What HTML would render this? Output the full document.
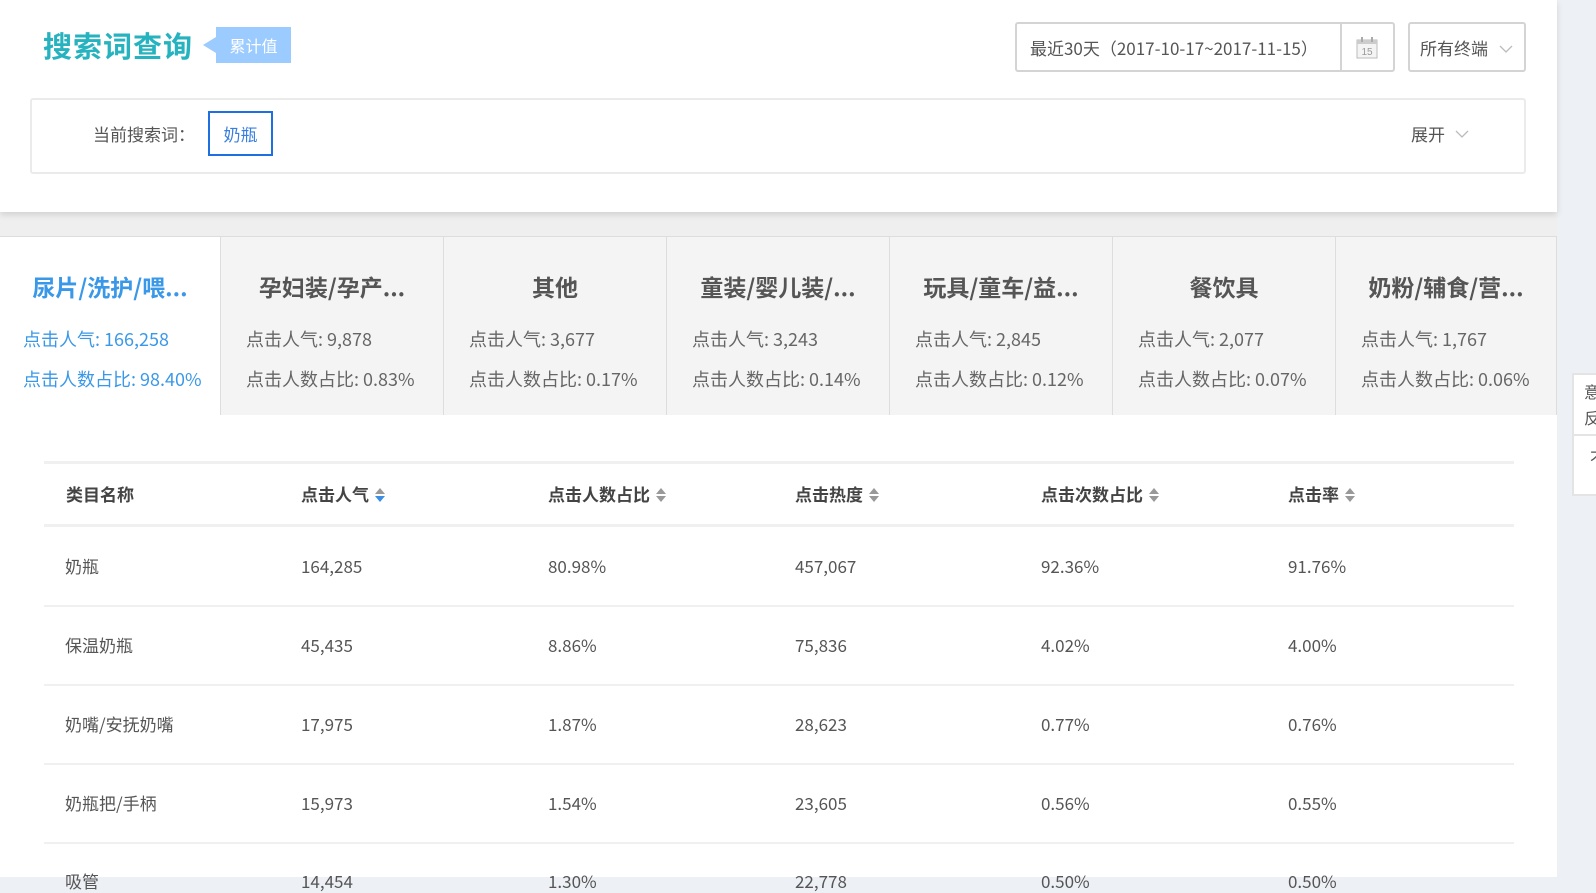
<!DOCTYPE html>
<html><head><meta charset="utf-8"><style>
*{margin:0;padding:0;box-sizing:border-box}
body{width:1596px;height:877px;overflow:hidden;background:#edf0f5;font-family:"Noto Sans CJK SC","Liberation Sans",sans-serif;color:#555;position:relative}
.a{position:absolute;white-space:nowrap;line-height:1.2}
#main{position:absolute;left:0;top:0;width:1557px;height:877px;background:#fff}
#top{position:absolute;left:0;top:0;width:1557px;height:212px;background:#fff;box-shadow:0 3px 6px rgba(0,0,0,.12);z-index:2}
#gap{position:absolute;left:0;top:212px;width:1557px;height:24px;background:#efefef}
.tab{position:absolute;top:236px;height:179px;width:223px;background:#f4f4f4;border-left:1px solid #ddd;border-top:1px solid #ddd}
.tab .t{position:absolute;top:36px;left:0;width:100%;text-align:center;font-size:23px;font-weight:bold;color:#555;line-height:1.2}
.tab .l{position:absolute;left:25px;font-size:18px;color:#666;line-height:1.2;white-space:nowrap}
.tab .l1{top:92px}.tab .l2{top:132px}
.hd{font-weight:bold;font-size:17px;color:#444}
.c{font-size:17px;color:#555}
.sort{display:inline-block;width:10px;height:16px;vertical-align:-2px;margin-left:6px;position:relative}
.sort:before{content:"";position:absolute;left:0;top:1px;border:5px solid transparent;border-bottom:6px solid #999;border-top:0}
.sort:after{content:"";position:absolute;left:0;top:9px;border:5px solid transparent;border-top:6px solid #999;border-bottom:0}
.sort.b:after{border-top-color:#3a8ee6}
.line{position:absolute;left:44px;width:1470px;height:2px;background:#f0f0f0}
</style></head><body>
<div id="main"></div>
<div id="top">
  <div class="a" style="left:43px;top:28px;font-size:29px;font-weight:bold;color:#26b3bf;letter-spacing:1px">搜索词查询</div>
  <div class="a" style="left:203px;top:37px;width:0;height:0;border:8px solid transparent;border-right:13px solid #9ccbff;border-left:0"></div>
  <div class="a" style="left:216px;top:27px;width:75px;height:36px;background:#9ccbff;color:#fff;font-size:16px;line-height:36px;text-align:center">累计值</div>
  <div class="a" style="left:1015px;top:22px;width:380px;height:50px;border:2px solid #d4d4d4;border-radius:3px"></div>
  <div class="a" style="left:1340px;top:23px;width:2px;height:48px;background:#d4d4d4"></div>
  <div class="a" style="left:1030px;top:38px;font-size:17px;color:#555">最近30天（2017-10-17~2017-11-15）</div>
  <svg class="a" style="left:1355px;top:36px" width="24" height="24" viewBox="0 0 24 24"><rect x="2" y="4" width="20" height="18" fill="#f4f4f4" stroke="#bbb"/><rect x="2" y="4" width="20" height="4" fill="#ccc"/><line x1="7" y1="1" x2="7" y2="6" stroke="#aaa" stroke-width="2"/><line x1="17" y1="1" x2="17" y2="6" stroke="#aaa" stroke-width="2"/><text x="12" y="19" font-size="10" text-anchor="middle" fill="#999" font-family="Liberation Sans">15</text></svg>
  <div class="a" style="left:1408px;top:22px;width:118px;height:50px;border:2px solid #d4d4d4;border-radius:3px"></div>
  <div class="a" style="left:1420px;top:38px;font-size:17px;color:#555">所有终端</div>
  <svg class="a" style="left:1499px;top:44px" width="14" height="10"><polyline points="1,2 7,8 13,2" fill="none" stroke="#bbb" stroke-width="1.3"/></svg>
  <div class="a" style="left:30px;top:98px;width:1496px;height:76px;border:2px solid #ebebeb;border-radius:3px"></div>
  <div class="a" style="left:93px;top:124px;font-size:17px;color:#555">当前搜索词：</div>
  <div class="a" style="left:208px;top:111px;width:65px;height:45px;border:2px solid #1e6fe0;color:#3a7fe0;font-size:17px;line-height:41px;text-align:center">奶瓶</div>
  <div class="a" style="left:1411px;top:124px;font-size:17px;color:#555">展开</div>
  <svg class="a" style="left:1455px;top:129px" width="14" height="10"><polyline points="1,2 7,8 13,2" fill="none" stroke="#bbb" stroke-width="1.3"/></svg>
</div>
<div id="gap"></div>
<div class="tab" style="left:0;background:#fff;border-left:0;width:220px"><div class="t" style="color:#3a98e8">尿片/洗护/喂...</div><div class="l l1" style="left:23px;color:#3a98e8">点击人气: 166,258</div><div class="l l2" style="left:23px;color:#3a98e8">点击人数占比: 98.40%</div></div>
<div class="tab" style="left:220px"><div class="t">孕妇装/孕产...</div><div class="l l1">点击人气: 9,878</div><div class="l l2">点击人数占比: 0.83%</div></div>
<div class="tab" style="left:443px"><div class="t">其他</div><div class="l l1">点击人气: 3,677</div><div class="l l2">点击人数占比: 0.17%</div></div>
<div class="tab" style="left:666px"><div class="t">童装/婴儿装/...</div><div class="l l1">点击人气: 3,243</div><div class="l l2">点击人数占比: 0.14%</div></div>
<div class="tab" style="left:889px"><div class="t">玩具/童车/益...</div><div class="l l1">点击人气: 2,845</div><div class="l l2">点击人数占比: 0.12%</div></div>
<div class="tab" style="left:1112px"><div class="t">餐饮具</div><div class="l l1">点击人气: 2,077</div><div class="l l2">点击人数占比: 0.07%</div></div>
<div class="tab" style="left:1335px;width:222px;border-right:1px solid #ddd"><div class="t">奶粉/辅食/营...</div><div class="l l1">点击人气: 1,767</div><div class="l l2">点击人数占比: 0.06%</div></div>

<div class="line" style="top:461px;height:3px"></div>
<div class="line" style="top:524px;height:3px"></div>
<div class="a hd" style="left:66px;top:484px">类目名称</div>
<div class="a hd" style="left:301px;top:484px">点击人气<span class="sort b"></span></div>
<div class="a hd" style="left:548px;top:484px">点击人数占比<span class="sort"></span></div>
<div class="a hd" style="left:795px;top:484px">点击热度<span class="sort"></span></div>
<div class="a hd" style="left:1041px;top:484px">点击次数占比<span class="sort"></span></div>
<div class="a hd" style="left:1288px;top:484px">点击率<span class="sort"></span></div>

<div class="a c" style="left:65px;top:556px">奶瓶</div><div class="a c" style="left:301px;top:556px">164,285</div><div class="a c" style="left:548px;top:556px">80.98%</div><div class="a c" style="left:795px;top:556px">457,067</div><div class="a c" style="left:1041px;top:556px">92.36%</div><div class="a c" style="left:1288px;top:556px">91.76%</div>
<div class="line" style="top:605px"></div>
<div class="a c" style="left:65px;top:635px">保温奶瓶</div><div class="a c" style="left:301px;top:635px">45,435</div><div class="a c" style="left:548px;top:635px">8.86%</div><div class="a c" style="left:795px;top:635px">75,836</div><div class="a c" style="left:1041px;top:635px">4.02%</div><div class="a c" style="left:1288px;top:635px">4.00%</div>
<div class="line" style="top:684px"></div>
<div class="a c" style="left:65px;top:714px">奶嘴/安抚奶嘴</div><div class="a c" style="left:301px;top:714px">17,975</div><div class="a c" style="left:548px;top:714px">1.87%</div><div class="a c" style="left:795px;top:714px">28,623</div><div class="a c" style="left:1041px;top:714px">0.77%</div><div class="a c" style="left:1288px;top:714px">0.76%</div>
<div class="line" style="top:763px"></div>
<div class="a c" style="left:65px;top:793px">奶瓶把/手柄</div><div class="a c" style="left:301px;top:793px">15,973</div><div class="a c" style="left:548px;top:793px">1.54%</div><div class="a c" style="left:795px;top:793px">23,605</div><div class="a c" style="left:1041px;top:793px">0.56%</div><div class="a c" style="left:1288px;top:793px">0.55%</div>
<div class="line" style="top:842px"></div>
<div class="a c" style="left:65px;top:871px">吸管</div><div class="a c" style="left:301px;top:871px">14,454</div><div class="a c" style="left:548px;top:871px">1.30%</div><div class="a c" style="left:795px;top:871px">22,778</div><div class="a c" style="left:1041px;top:871px">0.50%</div><div class="a c" style="left:1288px;top:871px">0.50%</div>

<div class="a" style="left:1572px;top:373px;width:40px;height:123px;background:#fff;border:2px solid #e4e4e4"></div>
<div class="a" style="left:1572px;top:434px;width:30px;height:2px;background:#e4e4e4"></div>
<div class="a" style="left:1584px;top:378px;font-size:16px;color:#555;line-height:26px">意<br>反</div>
<div class="a" style="left:1590px;top:448px;font-size:16px;color:#555">不</div>
</body></html>
